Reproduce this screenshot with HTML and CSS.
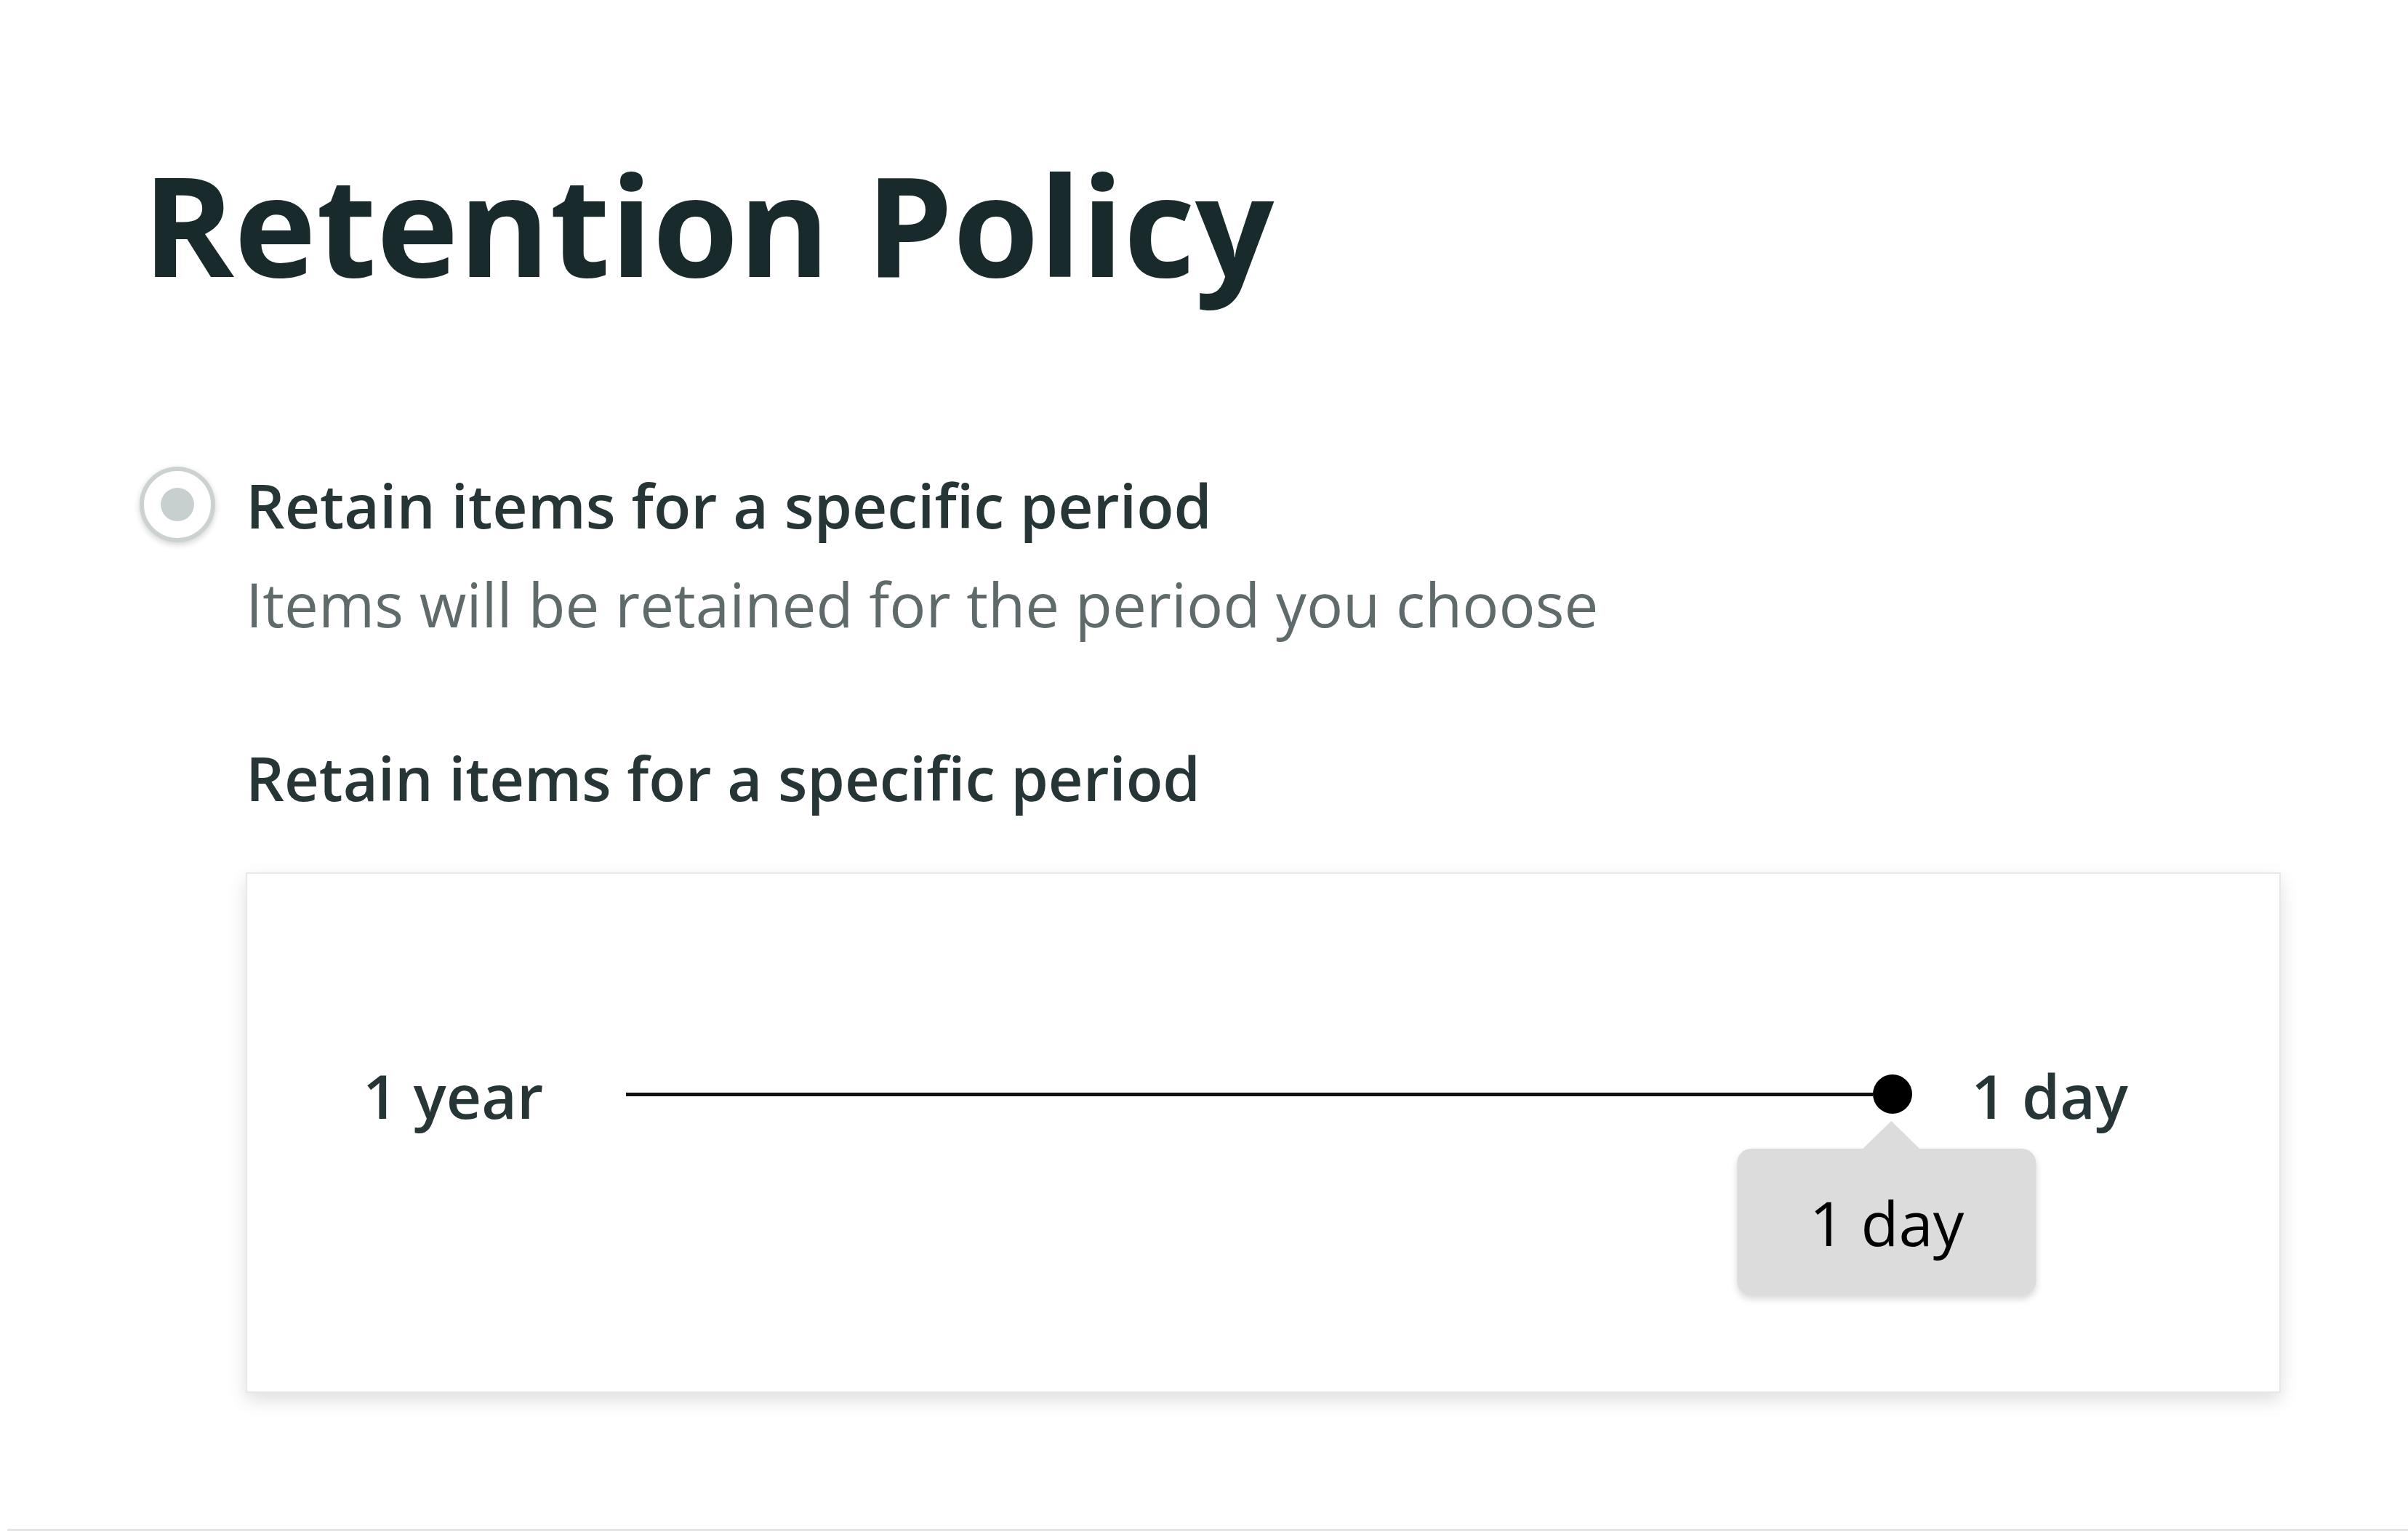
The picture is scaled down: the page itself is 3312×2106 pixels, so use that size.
FILE: index.html
```html
<!DOCTYPE html>
<html lang="en">
<head>
  <meta charset="UTF-8">
  <title>Retention Policy</title>
  <link rel="stylesheet" href="styles.css">
</head>
<body>
  <main class="page">
    <h1 class="title">Retention Policy</h1>

    <div class="option">
      <span class="radio"><span class="radio-dot"></span></span>
      <div class="option-body">
        <div class="option-title">Retain items for a specific period</div>
        <div class="option-desc">Items will be retained for the period you choose</div>

        <div class="field-label">Retain items for a specific period</div>
        <div class="card">
          <div class="range-row">
            <span class="range-end range-min">1 year</span>
            <div class="slider">
              <div class="track"></div>
              <div class="knob">
                <div class="tip">1 day</div>
              </div>
            </div>
            <span class="range-end range-max">1 day</span>
          </div>
        </div>
      </div>
    </div>
  </main>
  <div class="footer-rule"></div>
</body>
</html>
```

FILE: styles.css
```css
/* Base */
* { margin: 0; padding: 0; box-sizing: border-box; }
body {
  background: #fff; font-family: 'Open Sans', 'Noto Sans', sans-serif;
  color: #263536; width: 3312px; height: 2106px; overflow: hidden;
  display: flex; flex-direction: column;
}
.page { flex: 1; padding: 212px 175px 0 192px; }

/* Title */
.title {
  font-size: 191px; line-height: 190px; font-weight: 700;
  color: #182a2b; margin-left: 4px;
}

/* Radio option */
.option {
  display: grid; grid-template-columns: 104px 1fr; column-gap: 42px;
  margin-top: 242px;
}
.radio {
  width: 104px; height: 104px; border-radius: 50%;
  border: 6px solid #ccd2d2; background: #fff;
  box-shadow: 0 3px 8px rgba(0,0,0,0.18);
  display: flex; justify-content: center; align-items: center;
  margin-top: -2px;
}
.radio-dot { width: 46px; height: 46px; border-radius: 50%; background: #c8cfcf; }

.option-title { font-size: 84px; line-height: 101px; font-weight: 600; color: #263536; }
.option-desc { font-size: 83.5px; line-height: 100px; font-weight: 400; color: #5f6b6b; margin-top: 36px; }
.field-label { font-size: 83px; line-height: 100px; font-weight: 600; color: #263536; margin-top: 139px; }

/* Card with slider */
.card {
  margin-top: 80px; height: 716px; background: #fff;
  border: 2px solid #e8e8e8;
  box-shadow: 0 10px 24px rgba(0,0,0,0.13);
  padding: 276px 0 0 159px;
}
.range-row { display: flex; align-items: center; height: 54px; }
.range-end { font-size: 84px; line-height: 1; font-weight: 600; color: #263536; margin-top: 4px; }
.range-min { margin-right: 114px; }
.range-max { margin-left: 81px; }

.slider { position: relative; width: 1769px; height: 54px; display: flex; align-items: center; }
.track { flex: 1; height: 5px; background: #111; }
.knob { position: relative; width: 54px; height: 54px; border-radius: 50%; background: #000; }

/* Tooltip */
.tip {
  position: absolute; top: 102px; left: 50%; transform: translateX(-52%);
  width: 411px; height: 202px; border-radius: 20px;
  background: #dcdcdc; box-shadow: 0 5px 10px rgba(0,0,0,0.15);
  display: flex; justify-content: center; align-items: center;
  font-size: 85px; font-weight: 400; color: #000;
}
.tip::before {
  content: ''; position: absolute; top: -38px; left: 51.5%; transform: translateX(-50%);
  border-left: 39px solid transparent; border-right: 39px solid transparent;
  border-bottom: 38px solid #dcdcdc;
}

/* Bottom rule */
.footer-rule { height: 3px; background: #e4e4e4; margin-left: 10px; }
```
